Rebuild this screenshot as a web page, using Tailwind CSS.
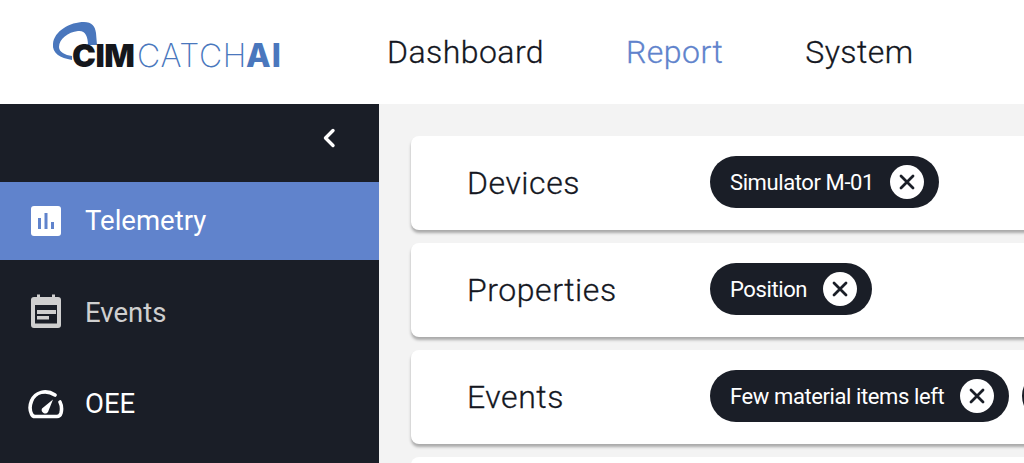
<!DOCTYPE html>
<html lang="en">
<head>
  <meta charset="UTF-8" />
  <title>CIM Catch AI</title>
  <script src="https://cdn.jsdelivr.net/npm/@tailwindcss/browser@4"></script>
</head>
<body class="h-[463px] overflow-hidden bg-[#f3f3f3] font-['Roboto',sans-serif]">

  <header class="flex h-[104px] items-center bg-white">
    <div class="relative ml-[52px] flex h-[104px] w-[335px] shrink-0 items-center">
      <svg class="absolute left-0 top-[21px]" width="46" height="40" viewBox="0 0 46 40">
        <path d="M20 39 C8 37 0 32 1 23 C2 10 18 1 32 1 C40 1 43 5 44 12 L45 24 L36 24 C36 15 33 9 26 10 C16 11 7 18 7 26 C7 31 13 34 20 35 Z" fill="#4a77bd" />
      </svg>
      <div class="relative mt-[7px] flex items-baseline pl-[20px] font-['Inter',sans-serif] text-[32px] leading-none">
        <span class="w-[65px] font-black tracking-[-0.5px] text-[#15171c]">CIM</span>
        <span class="w-[109px] font-extralight tracking-[0.6px] text-[#4a77bd]">CATCH</span>
        <span class="font-extrabold tracking-[1px] text-[#4a77bd]">AI</span>
      </div>
    </div>
    <nav class="flex items-center gap-[82px] text-[32px] font-light leading-none tracking-[0.45px] text-[#14171f] [-webkit-text-stroke-width:0.3px]">
      <a href="#">Dashboard</a>
      <a href="#" class="text-[#6083cc]">Report</a>
      <a href="#">System</a>
    </nav>
  </header>

  <div class="flex h-[359px]">
    <aside class="w-[379px] shrink-0 bg-[#1a1e27] text-[27.5px] leading-none">
      <div class="flex h-[78px] items-start justify-end pr-[40px] pt-[24px]">
        <svg width="20" height="20" viewBox="0 0 20 20" fill="none" stroke="white" stroke-width="3.4" stroke-linecap="round" stroke-linejoin="round">
          <path d="M14 2.5 L6.5 10 L14 17.500" />
        </svg>
      </div>
      <a href="#" class="relative flex h-[78px] items-center bg-[#6083cc] pl-[85px] text-white">
        <svg class="absolute left-[30px] top-[22px]" width="32" height="32" viewBox="0 0 32 32">
          <rect x="1" y="2" width="30" height="30" rx="3" fill="white" />
          <path d="M8 14h3v11H8zM14.500 9h3v16h-3zM21 18h3v7h-3z" fill="#6083cc" />
        </svg>
        Telemetry
      </a>
      <a href="#" class="relative mt-[13px] flex h-[80px] items-center pl-[85px] text-[#cfcfcf]">
        <svg class="absolute left-[30px] top-[21px]" width="32" height="35" viewBox="0 0 32 35">
          <path d="M4 3 h3 V0.500 h3 V3 h12 V0.500 h3 V3 h3 a3 3 0 0 1 3 3 v25 a3 3 0 0 1 -3 3 H4 a3 3 0 0 1 -3 -3 V6 a3 3 0 0 1 3 -3z" fill="#cfcfcf" />
          <rect x="5" y="11" width="22" height="18.500" fill="#1a1e27" />
          <path d="M7 16h19v4H7zM7 22h12v3.500H7z" fill="#cfcfcf" />
        </svg>
        Events
      </a>
      <a href="#" class="relative mt-[11px] flex h-[80px] items-center pl-[85px] text-white">
        <svg class="absolute left-[28px] top-[25px]" width="36" height="30" viewBox="0 0 36 30" fill="none" stroke="white">
          <path d="M7 27.500 H29 Q32 27.500 33 24 Q34.500 18 32 13 M27 6 C18 0 7 3 3.500 12 C1.500 17 2 22 3.500 25 Q4.500 27.500 7 27.500" stroke-width="3.600" stroke-linecap="round" />
          <path d="M14 19.500 L25 10.500 L20 23 A3.500 3.500 0 0 1 14 19.500Z" fill="white" stroke="none" />
        </svg>
        OEE
      </a>
    </aside>

    <main class="flex min-w-0 flex-1 flex-col gap-[13px] overflow-hidden pl-[32px] pt-[32px]">
      <div class="flex h-[94px] w-[700px] shrink-0 items-center rounded-l-[8px] bg-white pl-[56px] shadow-[0_3px_3px_rgba(0,0,0,0.3)]">
        <span class="w-[243px] shrink-0 text-[32px] font-light tracking-[0.55px] text-[#14171f] [-webkit-text-stroke-width:0.3px]">Devices</span>
        <span class="mb-[2px] flex h-[52px] items-center rounded-full bg-[#1a1e27] pl-[20px] pr-[15px] text-[22px] tracking-[-0.4px] text-white">
          Simulator M-01
          <span class="ml-[16px] flex h-[34px] w-[34px] items-center justify-center rounded-full bg-white">
            <svg width="20" height="20" viewBox="0 0 20 20" stroke="#1a1e27" stroke-width="2.800" stroke-linecap="round"><path d="M4 4 L16 16 M16 4 L4 16" /></svg>
          </span>
        </span>
      </div>
      <div class="flex h-[94px] w-[700px] shrink-0 items-center rounded-l-[8px] bg-white pl-[56px] shadow-[0_3px_3px_rgba(0,0,0,0.3)]">
        <span class="w-[243px] shrink-0 text-[32px] font-light tracking-[0.55px] text-[#14171f] [-webkit-text-stroke-width:0.3px]">Properties</span>
        <span class="mb-[2px] flex h-[52px] items-center rounded-full bg-[#1a1e27] pl-[20px] pr-[15px] text-[22px] tracking-[-0.4px] text-white">
          Position
          <span class="ml-[16px] flex h-[34px] w-[34px] items-center justify-center rounded-full bg-white">
            <svg width="20" height="20" viewBox="0 0 20 20" stroke="#1a1e27" stroke-width="2.800" stroke-linecap="round"><path d="M4 4 L16 16 M16 4 L4 16" /></svg>
          </span>
        </span>
      </div>
      <div class="flex h-[94px] w-[700px] shrink-0 items-center rounded-l-[8px] bg-white pl-[56px] shadow-[0_3px_3px_rgba(0,0,0,0.3)]">
        <span class="w-[243px] shrink-0 text-[32px] font-light tracking-[0.55px] text-[#14171f] [-webkit-text-stroke-width:0.3px]">Events</span>
        <span class="mb-[2px] flex h-[52px] shrink-0 items-center rounded-full bg-[#1a1e27] pl-[20px] pr-[15px] text-[22px] tracking-[-0.4px] text-white">
          Few material items left
          <span class="ml-[16px] flex h-[34px] w-[34px] items-center justify-center rounded-full bg-white">
            <svg width="20" height="20" viewBox="0 0 20 20" stroke="#1a1e27" stroke-width="2.800" stroke-linecap="round"><path d="M4 4 L16 16 M16 4 L4 16" /></svg>
          </span>
        </span>
        <span class="mb-[2px] ml-[13px] h-[52px] w-[60px] shrink-0 rounded-full bg-[#1a1e27]"></span>
      </div>
      <div class="h-[94px] w-[700px] shrink-0 rounded-l-[8px] bg-white"></div>
    </main>
  </div>

</body>
</html>
